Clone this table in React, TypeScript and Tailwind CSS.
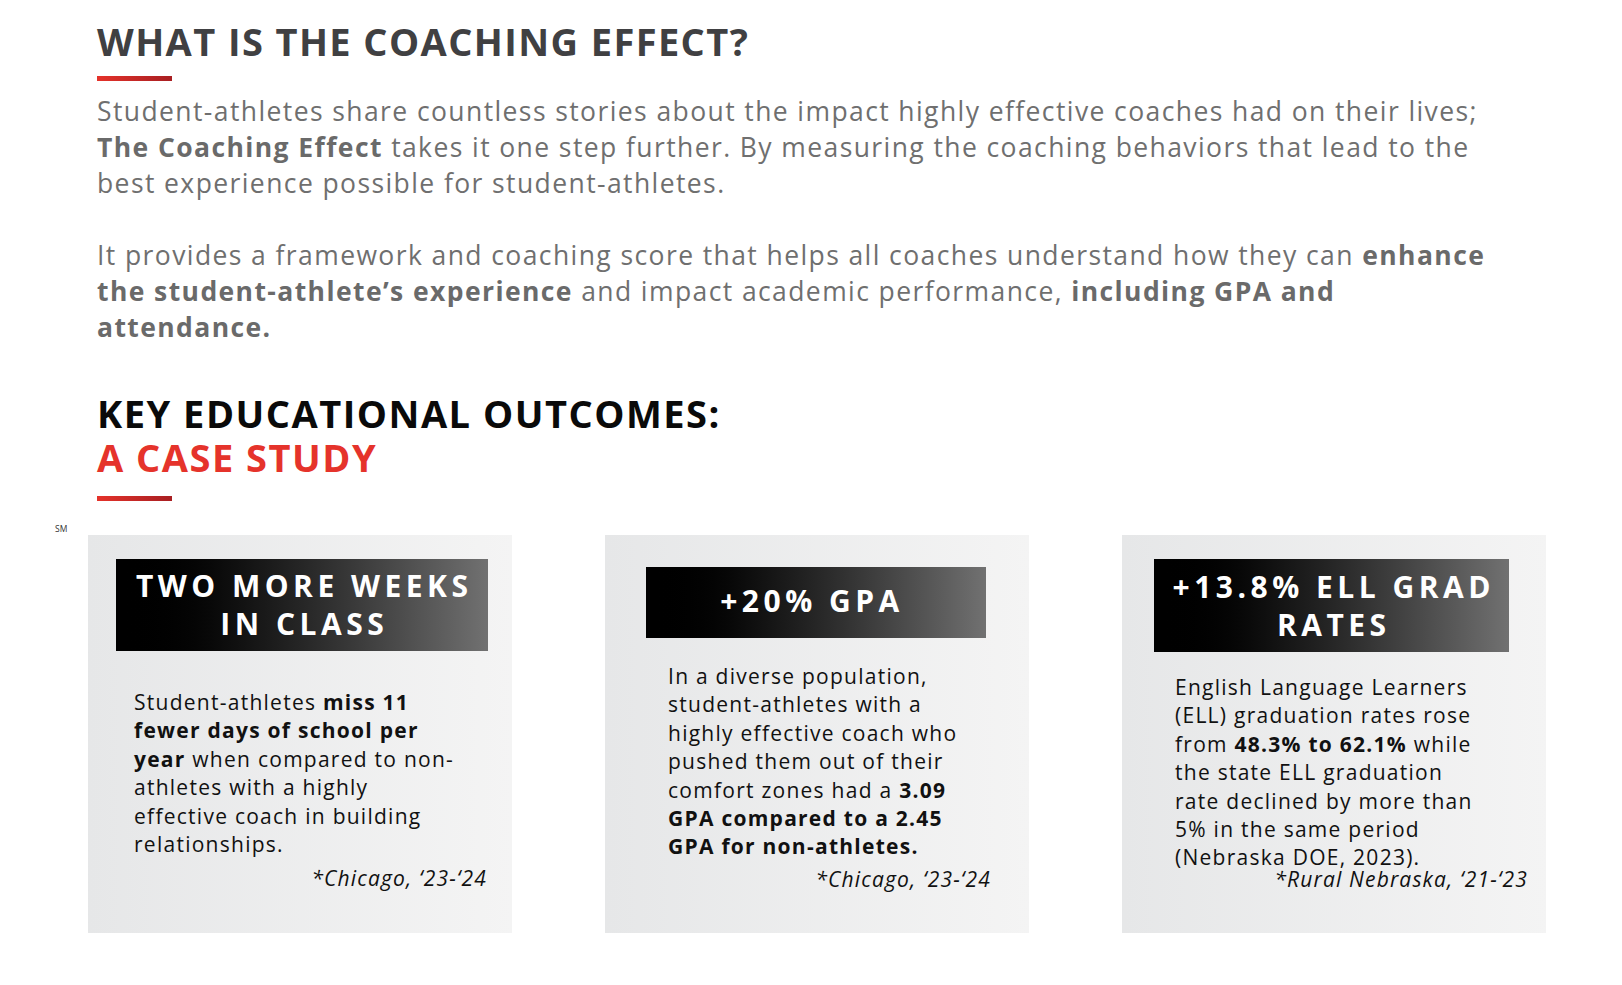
import { FC, ReactNode } from "react";

interface CardProps {
  title: ReactNode;
  cite: string;
  children: ReactNode;
  headerClass: string;
  titleClass?: string;
  bodyClass: string;
  citeClass: string;
}

const OutcomeCard: FC<CardProps> = ({
  title,
  cite,
  children,
  headerClass,
  titleClass = "pl-[4.5px]",
  bodyClass,
  citeClass,
}) => {
  return (
    <div className="w-[424px] h-[398px] flex flex-col bg-linear-to-r from-[#e6e7e8] to-[#f4f4f4]">
      <div
        className={`${headerClass} flex items-center justify-center bg-linear-to-r from-[#000000] via-[#262626] to-[#717171]`}
      >
        <div
          className={`${titleClass} text-center text-white font-bold text-[30px] leading-[38px] tracking-[0.15em]`}
        >
          {title}
        </div>
      </div>
      <div className={`${bodyClass} whitespace-nowrap text-[21px] leading-[28.4px] tracking-[0.06em] text-[#111111]`}>
        {children}
      </div>
      <div className={`${citeClass} text-right italic text-[21px] leading-[28px] tracking-[0.055em] text-[#111111]`}>
        {cite}
      </div>
    </div>
  );
};

export default function App() {
  return (
    <div className="w-[1622px] min-h-[985px] bg-white font-['Open_Sans',sans-serif]">
      <div className="pt-[18px] pl-[97px]">
        <h1 className="text-[38px] leading-[46px] font-bold tracking-[1.4px] text-[#404042]">
          WHAT IS THE COACHING EFFECT?
        </h1>
        <div className="mt-[12px] w-[75px] h-[5px] bg-linear-to-r from-[#e5322a] to-[#a81f22]" />

        <p className="mt-[12px] whitespace-nowrap text-[26.5px] leading-[36px] tracking-[0.053em] text-[#6f6f6f]">
          Student-athletes share countless stories about the impact highly effective coaches had on their lives;
          <br />
          <span className="font-bold text-[#6a6a6a]">The Coaching Effect</span> takes it one step further. By
          measuring the coaching behaviors that lead to the
          <br />
          best experience possible for student-athletes.
        </p>

        <p className="mt-[36px] whitespace-nowrap text-[26.5px] leading-[36px] tracking-[0.053em] text-[#6f6f6f]">
          It provides a framework and coaching score that helps all coaches understand how they can{" "}
          <span className="font-bold text-[#6a6a6a]">enhance</span>
          <br />
          <span className="font-bold text-[#6a6a6a]">the student-athlete’s experience</span> and impact academic
          performance, <span className="font-bold text-[#6a6a6a]">including GPA and</span>
          <br />
          <span className="font-bold text-[#6a6a6a]">attendance.</span>
        </p>

        <h2 className="mt-[46px] text-[38px] leading-[44px] font-bold tracking-[1.5px] text-[#0a0a0a]">
          KEY EDUCATIONAL OUTCOMES:
          <br />
          <span className="text-[#e5332b]">A CASE STUDY</span>
        </h2>
        <div className="mt-[17px] w-[75px] h-[5px] bg-linear-to-r from-[#e5322a] to-[#a81f22]" />
      </div>

      <div className="mt-[23px] pl-[55px] h-[9px] text-[8.5px] leading-[9px] text-[#333333]">SM</div>

      <div className="mt-[2px] pl-[88px] flex gap-[93px]">
        <OutcomeCard
          headerClass="ml-[28px] mt-[24px] w-[372px] h-[92px]"
          bodyClass="ml-[46px] mt-[37px]"
          citeClass="mt-[6px] w-[399px]"
          cite="*Chicago, ‘23-‘24"
          title={
            <>
              TWO MORE WEEKS
              <br />
              IN CLASS
            </>
          }
        >
          Student-athletes <b>miss 11</b>
          <br />
          <b>fewer days of school per</b>
          <br />
          <b>year</b> when compared to non-
          <br />
          athletes with a highly
          <br />
          effective coach in building
          <br />
          relationships.
        </OutcomeCard>

        <OutcomeCard
          headerClass="ml-[41px] mt-[32px] w-[340px] h-[71px] pb-[4px]"
          titleClass="pr-[8px]"
          bodyClass="ml-[63px] mt-[24px]"
          citeClass="mt-[4px] w-[386px]"
          cite="*Chicago, ‘23-‘24"
          title="+20% GPA"
        >
          In a diverse population,
          <br />
          student-athletes with a
          <br />
          highly effective coach who
          <br />
          pushed them out of their
          <br />
          comfort zones had a <b>3.09</b>
          <br />
          <b>GPA compared to a 2.45</b>
          <br />
          <b>GPA for non-athletes.</b>
        </OutcomeCard>

        <OutcomeCard
          headerClass="ml-[32px] mt-[24px] w-[355px] h-[93px]"
          bodyClass="ml-[53px] mt-[21px]"
          citeClass="mt-[-7px] w-[406px]"
          cite="*Rural Nebraska, ‘21-‘23"
          title={
            <>
              +13.8% ELL GRAD
              <br />
              RATES
            </>
          }
        >
          English Language Learners
          <br />
          (ELL) graduation rates rose
          <br />
          from <b>48.3% to 62.1%</b> while
          <br />
          the state ELL graduation
          <br />
          rate declined by more than
          <br />
          5% in the same period
          <br />
          (Nebraska DOE, 2023).
        </OutcomeCard>
      </div>
    </div>
  );
}
